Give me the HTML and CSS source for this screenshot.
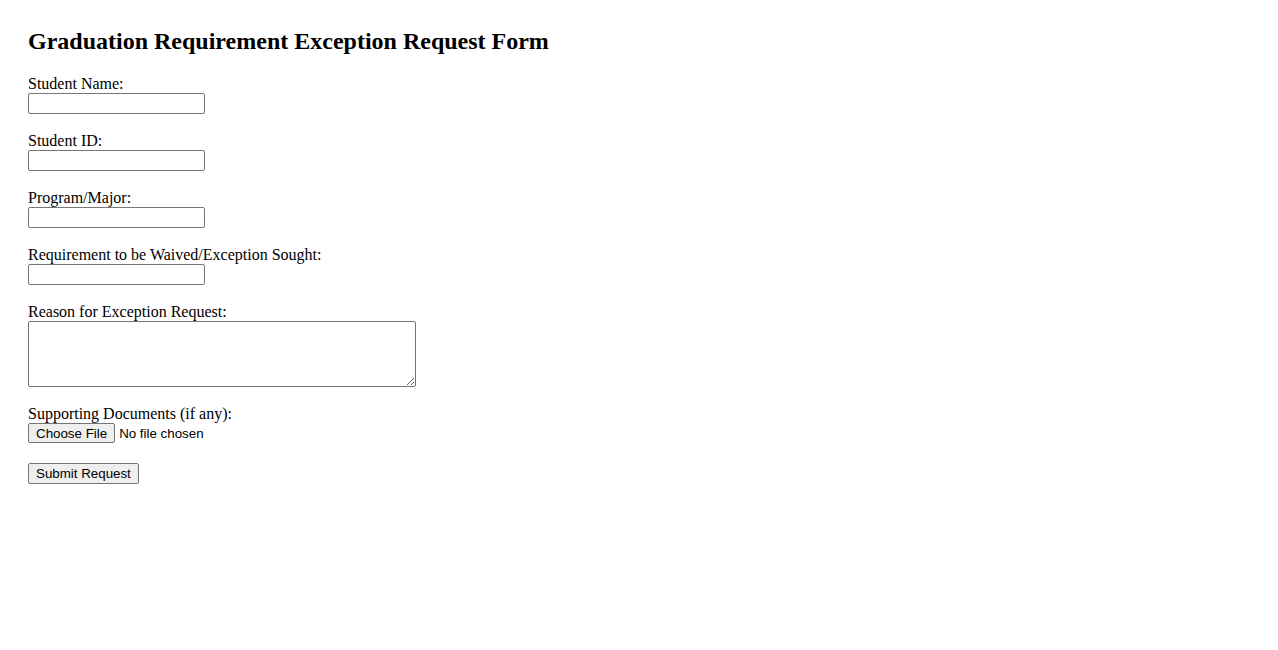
FILE: index.html
```html
<!DOCTYPE html>
<html lang="en">
<head>
    <meta charset="UTF-8">
    <meta name="viewport" content="width=device-width, initial-scale=1.0">
    <title>Graduation Requirement Exception Request Form</title>
    <link rel="stylesheet" href="styles.css">
</head>
<body>
    <h2>Graduation Requirement Exception Request Form</h2>
    <form class="request-form">
        <label for="studentName">Student Name:</label><br>
        <input type="text" id="studentName" name="studentName"><br><br>

        <label for="studentId">Student ID:</label><br>
        <input type="text" id="studentId" name="studentId"><br><br>

        <label for="program">Program/Major:</label><br>
        <input type="text" id="program" name="program"><br><br>

        <label for="requirement">Requirement to be Waived/Exception Sought:</label><br>
        <input type="text" id="requirement" name="requirement"><br><br>

        <label for="reason">Reason for Exception Request:</label><br>
        <textarea id="reason" name="reason"></textarea><br><br>

        <label for="documents">Supporting Documents (if any):</label><br>
        <input type="file" id="documents" name="documents"><br><br>

        <input type="submit" value="Submit Request">
    </form>
</body>
</html>
```

FILE: styles.css
```css
body {
    margin: 28px;
    font-family: "Liberation Serif", "Times New Roman", serif;
    font-size: 16px;
    color: #000;
    background: #fff;
}
h2 {
    font-size: 24px;
    margin: 0 0 20px;
}
input[type="text"] {
    box-sizing: border-box;
    width: 177px;
    height: 21px;
    padding: 1px 2px;
    border: 1px solid #767676;
    border-radius: 2px;
    font-family: "Liberation Sans", Arial, sans-serif;
    font-size: 13.33px;
}
textarea {
    box-sizing: border-box;
    width: 388px;
    height: 66px;
    border: 1px solid #767676;
    border-radius: 2px;
    font-family: "Liberation Mono", monospace;
    font-size: 13.33px;
    vertical-align: top;
}
input[type="file"] {
    font-family: "Liberation Sans", Arial, sans-serif;
    font-size: 13.33px;
}
input[type="file"]::file-selector-button {
    box-sizing: border-box;
    height: 20px;
    font-family: "Liberation Sans", Arial, sans-serif;
    font-size: 13.33px;
    background: #efefef;
    border: 1px solid #767676;
    border-radius: 2px;
    padding: 1px 7px;
    margin-right: 4px;
    color: #000;
}
input[type="submit"] {
    box-sizing: border-box;
    height: 21px;
    margin-top: 2px;
    font-family: "Liberation Sans", Arial, sans-serif;
    font-size: 13.33px;
    background: #efefef;
    border: 1px solid #767676;
    border-radius: 2px;
    padding: 1px 7px;
    color: #000;
}
```
